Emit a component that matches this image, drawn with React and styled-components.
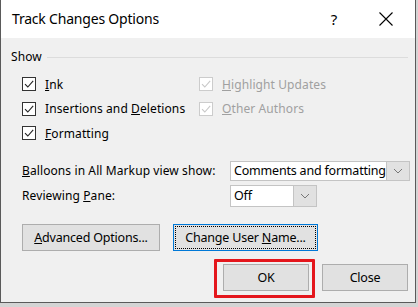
import React from "react";
import styled, { createGlobalStyle } from "styled-components";

const Global = createGlobalStyle`
  html, body { margin: 0; padding: 0; background: #d4d4d4; }
  body { font-family: "Noto Sans", "Open Sans", "Liberation Sans", sans-serif; color: #000; }
  #root { width: 418px; height: 307px; overflow: hidden; }
`;

const Dialog = styled.div`
  width: 416px;
  height: 303px;
  border: 1px solid #5a5a5a;
  border-top: none;
  background: #f0f0f0;
  display: flex;
  flex-direction: column;
  box-sizing: border-box;
`;

const TitleBar = styled.div`
  height: 38px;
  background: #fff;
  display: flex;
  align-items: center;
  padding-left: 11px;
  flex-shrink: 0;
`;

const Title = styled.div`
  flex: 1;
  font-size: 14px;
  letter-spacing: -0.2px;
  padding-bottom: 1px;
`;

const TitleBtn = styled.div`
  width: ${(p) => p.$w}px;
  display: flex;
  justify-content: center;
  align-items: center;
  font-size: 15px;
  height: 38px;
`;

const Body = styled.div`
  padding: 11px 7px 0 10px;
  display: flex;
  flex-direction: column;
  font-size: 12px;
  letter-spacing: 0.1px;
`;

const GroupHeader = styled.div`
  display: flex;
  align-items: center;
  gap: 5px;
  height: 16px;
  line-height: 16px;
`;

const Rule = styled.div`
  flex: 1;
  height: 1px;
  background: #dcdcdc;
  margin-top: 1px;
`;

const CheckGrid = styled.div`
  display: grid;
  grid-template-columns: 177px auto;
  grid-auto-rows: 24.5px;
  margin: 7px 0 0 11px;
`;

const CheckItem = styled.label`
  display: flex;
  align-items: center;
  gap: 9px;
  color: ${(p) => (p.$disabled ? "#a0a0a0" : "#000")};
`;

const Box = styled.span`
  width: 14px;
  height: 14px;
  box-sizing: border-box;
  border: 1px solid ${(p) => (p.$disabled ? "#cccccc" : "#333")};
  background: #fff;
  display: flex;
  align-items: center;
  justify-content: center;
`;

const FormGrid = styled.div`
  display: grid;
  grid-template-columns: 208px auto;
  row-gap: 4px;
  margin: 15px 0 0 11px;
  align-items: center;
`;

const Select = styled.div`
  width: ${(p) => p.$w}px;
  height: ${(p) => p.$h}px;
  box-sizing: border-box;
  border: 1px solid #c4c4c4;
  background: #fff;
  display: flex;
  align-items: stretch;
`;

const SelectValue = styled.div`
  flex: 1;
  padding-left: 3px;
  display: flex;
  align-items: center;
  font-size: 12.5px;
  letter-spacing: -0.2px;
  white-space: nowrap;
  overflow: hidden;
`;

const DropBtn = styled.div`
  width: 22px;
  background: #e1e1e1;
  border-left: 1px solid #c4c4c4;
  display: flex;
  align-items: center;
  justify-content: center;
`;

const ButtonRow = styled.div`
  display: flex;
  gap: 13px;
  margin: ${(p) => p.$m};
  justify-content: ${(p) => p.$justify || "flex-start"};
`;

const Button = styled.div`
  position: relative;
  width: ${(p) => p.$w}px;
  height: 27px;
  box-sizing: border-box;
  background: #e1e1e1;
  border: 1px solid ${(p) => (p.$focused ? "#0078d7" : "#adadad")};
  display: flex;
  align-items: center;
  justify-content: center;
  font-size: 12.5px;
  letter-spacing: -0.2px;
`;

const FocusRing = styled.span`
  position: absolute;
  inset: 1px;
  border: 1px dotted #000;
  pointer-events: none;
`;

const Highlight = styled.span`
  position: absolute;
  left: -10px;
  right: -7px;
  top: -6px;
  bottom: -8px;
  border: 3px solid #e4161c;
  border-radius: 1px;
  pointer-events: none;
`;

const Check = ({ color }) => (
  <svg width="12" height="12" viewBox="0 0 12 12">
    <path d="M2 6.2 L4.8 9 L10.2 2.8" fill="none" stroke={color} strokeWidth="1.1" />
  </svg>
);

const CheckBox = ({ children, disabled }) => (
  <CheckItem $disabled={disabled}>
    <Box $disabled={disabled}>
      <Check color={disabled ? "#c8c8c8" : "#222"} />
    </Box>
    <span>{children}</span>
  </CheckItem>
);

const Chevron = () => (
  <svg width="10" height="6" viewBox="0 0 10 6">
    <path d="M1 1 L5 5 L9 1" fill="none" stroke="#777" strokeWidth="1" />
  </svg>
);

const CloseX = () => (
  <svg width="14" height="14" viewBox="0 0 14 14">
    <path d="M0.5 0.5 L13.5 13.5 M13.5 0.5 L0.5 13.5" stroke="#000" strokeWidth="1.1" />
  </svg>
);

export default function App() {
  return (
    <>
      <Global />
      <Dialog>
        <TitleBar>
          <Title>Track Changes Options</Title>
          <TitleBtn $w={46}>?</TitleBtn>
          <TitleBtn $w={58}>
            <CloseX />
          </TitleBtn>
        </TitleBar>
        <Body>
          <GroupHeader>
            <span>Show</span>
            <Rule />
          </GroupHeader>
          <CheckGrid>
            <CheckBox><u>I</u>nk</CheckBox>
            <CheckBox disabled><u>H</u>ighlight Updates</CheckBox>
            <CheckBox>Insertions and <u>D</u>eletions</CheckBox>
            <CheckBox disabled><u>O</u>ther Authors</CheckBox>
            <CheckBox><u>F</u>ormatting</CheckBox>
          </CheckGrid>
          <FormGrid>
            <span><u>B</u>alloons in All Markup view show:</span>
            <Select $w={180} $h={20}>
              <SelectValue>Comments and formatting</SelectValue>
              <DropBtn><Chevron /></DropBtn>
            </Select>
            <span>Reviewing <u>P</u>ane:</span>
            <Select $w={87} $h={22}>
              <SelectValue>Off</SelectValue>
              <DropBtn><Chevron /></DropBtn>
            </Select>
          </FormGrid>
          <ButtonRow $m="17px 0 0 11px">
            <Button $w={138}><span><u>A</u>dvanced Options...</span></Button>
            <Button $w={145} $focused>
              <FocusRing />
              <span>Change User <u>N</u>ame...</span>
            </Button>
          </ButtonRow>
          <ButtonRow $m="13px 0 0 0" $justify="flex-end">
            <Button $w={86}>
              <Highlight />
              OK
            </Button>
            <Button $w={86}>Close</Button>
          </ButtonRow>
        </Body>
      </Dialog>
    </>
  );
}
